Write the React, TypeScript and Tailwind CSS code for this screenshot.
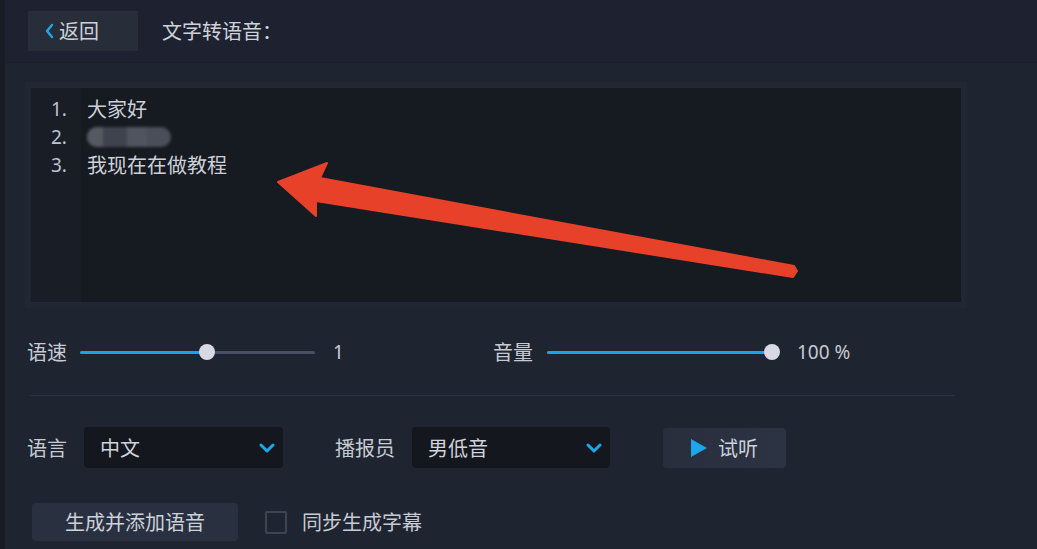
import React from 'react';

const font = { fontFamily: '"Noto Sans CJK SC", "Noto Sans", sans-serif' };

function Slider({ width, percent }: { width: number; percent: number }) {
  return (
    <div className="relative h-[16px] flex items-center" style={{ width }}>
      <div className="h-[3px] w-full rounded-full bg-[#4a4f66]" />
      <div className="absolute left-0 h-[3px] rounded-full bg-[#1aa3e6]" style={{ width: `${percent}%` }} />
      <div
        className="absolute h-[16px] w-[16px] -ml-[8px] rounded-full bg-[#d6d9e4]"
        style={{ left: `${percent}%` }}
      />
    </div>
  );
}

function Chevron() {
  return (
    <svg width="16" height="10" viewBox="0 0 16 10" fill="none">
      <polyline points="2,2 8,8 14,2" stroke="#1ea7e8" strokeWidth="3" strokeLinecap="round" strokeLinejoin="round" />
    </svg>
  );
}

function Select({ value, width }: { value: string; width: number }) {
  return (
    <div
      className="h-[41px] rounded-[4px] bg-[#14171e] flex items-center justify-between pl-[16px] pr-[8px] text-[#d0d3db]"
      style={{ width }}
    >
      <span>{value}</span>
      <Chevron />
    </div>
  );
}

export default function App() {
  return (
    <div
      className="relative w-[1037px] h-[549px] overflow-hidden bg-[#1f2431] border-l-[5px] border-[#191c25] text-[20px] text-[#c6cad3]"
      style={font}
    >
      {/* header */}
      <div className="h-[63px] flex items-center pl-[23px] border-b border-[#1a1e27] bg-[#1e2230]">
        <button className="w-[110px] h-[40px] bg-[#282d3a] flex items-center pl-[16px] gap-[5px] text-[#cdd1da]">
          <svg width="10" height="16" viewBox="0 0 10 16" fill="none">
            <polyline points="8,2 3,8 8,14" stroke="#1ea7e8" strokeWidth="2.4" strokeLinecap="round" strokeLinejoin="round" />
          </svg>
          <span>返回</span>
        </button>
        <span className="ml-[24px] text-[#cfd2da]">文字转语音：</span>
      </div>

      <div className="pl-[22px] pr-[70px]">
        {/* text area */}
        <div className="mt-[25px] ml-[4px] w-[930px] h-[214px] bg-[#161a21] flex shadow-[0_0_0_6px_#222734]">
          <div className="w-[50px] bg-[#191d25] pt-[7px] pl-[20px] text-[19px] leading-[28px] text-[#bfc3cc]" style={{ fontFamily: '"Noto Sans", sans-serif' }}>
            <div>1.</div>
            <div>2.</div>
            <div>3.</div>
          </div>
          <div className="pt-[7px] pl-[6px] leading-[28px] text-[#cdd0d8]">
            <div>大家好</div>
            <div className="h-[28px] flex items-center">
              <div className="w-[84px] h-[20px] rounded-full bg-[#4a4e58] blur-[1.5px] flex">
                <div className="w-[16px] h-full rounded-l-full bg-[#555962]" />
                <div className="w-[24px] h-full bg-[#3f434d]" />
                <div className="w-[20px] h-full bg-[#50545e]" />
              </div>
            </div>
            <div>我现在在做教程</div>
          </div>
        </div>

        {/* sliders */}
        <div className="mt-[35px] h-[30px] flex items-center">
          <div className="w-[466px] flex items-center">
            <span className="w-[53px]">语速</span>
            <Slider width={235} percent={54} />
            <span className="ml-[18px] text-[19px]" style={{ fontFamily: '"Noto Sans", sans-serif' }}>1</span>
          </div>
          <div className="flex items-center">
            <span className="w-[54px]">音量</span>
            <Slider width={225} percent={100} />
            <span className="ml-[25px] text-[19px]" style={{ fontFamily: '"Noto Sans", sans-serif' }}>100 %</span>
          </div>
        </div>

        <div className="mt-[28px] ml-[3px] w-[925px] h-px bg-[#2c3241]" />

        {/* language row */}
        <div className="mt-[31px] flex items-center">
          <span className="w-[57px]">语言</span>
          <Select value="中文" width={199} />
          <span className="ml-[52px] w-[77px]">播报员</span>
          <Select value="男低音" width={198} />
          <button className="ml-[53px] w-[123px] h-[40px] rounded-[4px] bg-gradient-to-r from-[#282e3c] to-[#2c3343] flex items-center pl-[27px] gap-[10px] text-[#cdd1da]">
            <svg width="18" height="20" viewBox="0 0 18 20">
              <polygon points="1,1 17,10 1,19" fill="#1ea7e8" />
            </svg>
            <span>试听</span>
          </button>
        </div>

        {/* generate row */}
        <div className="mt-[35px] flex items-center">
          <button className="ml-[5px] w-[206px] h-[38px] rounded-[4px] bg-[#293040] text-[#cdd1da]">生成并添加语音</button>
          <div className="ml-[27px] w-[22px] h-[23px] border-2 border-[#3e4453] rounded-[2px] bg-[#1f2431]" />
          <span className="ml-[15px]">同步生成字幕</span>
        </div>
      </div>

      {/* annotation arrow */}
      <svg className="absolute top-0 -left-[5px] pointer-events-none" width="1037" height="549" viewBox="0 0 1037 549">
        <polygon
          points="278,182 327,163 320,178 794,266 797,271 793,277 316,201 316,216"
          fill="#e8412a"
          stroke="#e8412a"
          strokeWidth="2"
          strokeLinejoin="round"
        />
      </svg>
    </div>
  );
}
